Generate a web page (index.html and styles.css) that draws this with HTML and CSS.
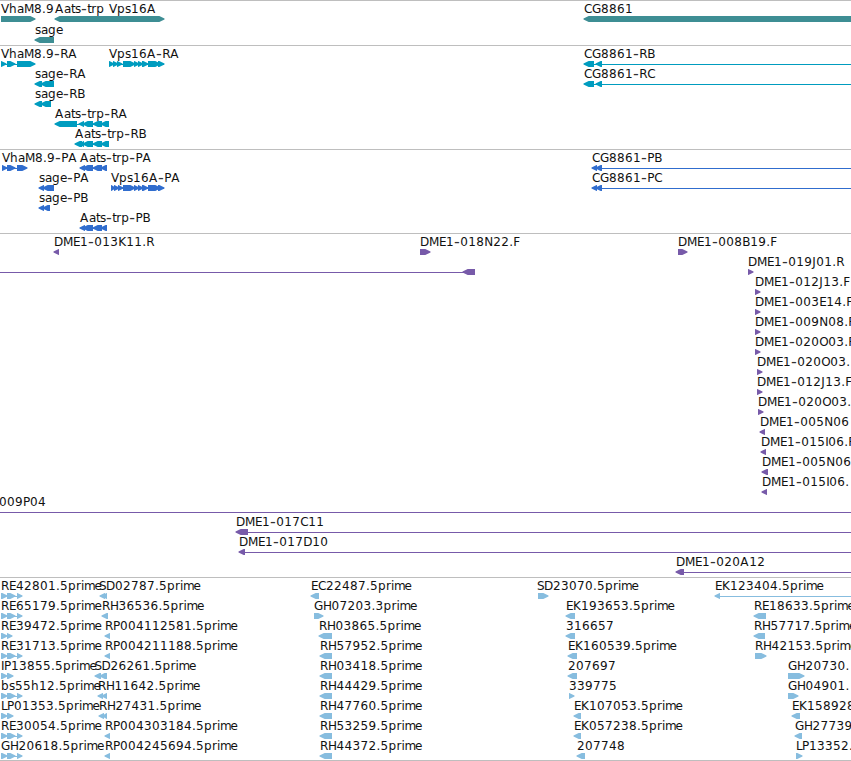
FILE: index.html
```html
<!DOCTYPE html>
<html lang="en">
<head>
<meta charset="utf-8">
<title>Genome browser</title>
<link rel="stylesheet" href="styles.css">
</head>
<body>
<main class="browser" id="browser"></main>
<script src="tracks.js"></script>
</body>
</html>
```
FILE: styles.css
```css
body {
  margin: 0;
  background: #fff;
  overflow: hidden;
}

.browser {
  display: flex;
  flex-direction: column;
  width: 851px;
  height: 761px;
  box-sizing: border-box;
  border-bottom: 1px solid #bebebe;
}

.track {
  border-top: 1px solid #bebebe;
  overflow: hidden;
}

.track svg {
  display: block;
}

.track text {
  font-family: "DejaVu Sans", sans-serif;
  font-size: 12px;
  fill: #111;
}

.track .dash {
  font-size: 16px;
  fill: #333;
}

.genes { color: #3e8e94; }
.transcripts { color: #009cbf; }
.proteins { color: #306dce; }
.clones { color: #775aa9; }
.ests { color: #87bddf; }
```
FILE: tracks.js
```js
// Each feature: [row, label, label x, glyphs].
// Glyphs: ">a,b" forward exon, "<a,b" reverse exon, "-a,b" intron line.
const leftLong = '>1,7 >7,15 -12,19 >17,22';
const vps = '>123,135 >134,139 >138,143 >142,148 >148,160 >158,164';
const aats = '-82,107 <80,85 <83,93 <93,102 <101,107';
const tracks = [
  { name: 'genes', height: 44, pitch: 21, features: [
    [0, 'VhaM8.9', 1, '>1,35'], [0, 'Aats-trp', 55, '<55,109'],
    [0, 'Vps16A', 109, '>109,164'], [0, 'CG8861', 584, '<584,860'],
    [1, 'sage', 35, '<35,54'],
  ] },
  { name: 'transcripts', height: 103, pitch: 20, features: [
    [0, 'VhaM8.9-RA', 1, '-1,30 >1,6 >7,15 >17,35'],
    [0, 'Vps16A-RA', 109, '-109,164 >109,114 >113,118 >117,122 ' + vps],
    [0, 'CG8861-RB', 584, '<584,594 -593,851 <596,602'],
    [1, 'sage-RA', 35, '<35,42 <41,54'],
    [1, 'CG8861-RC', 584, '<584,594 -593,851 <596,602'],
    [2, 'sage-RB', 35, '<35,42 <41,51'],
    [3, 'Aats-trp-RA', 55, '<55,77 -77,109 <79,84 <83,93 <93,102 <101,109'],
    [4, 'Aats-trp-RB', 75, '-77,109 <75,82 <80,84 <83,93 <93,102 <101,109'],
  ] },
  { name: 'proteins', height: 83, pitch: 20, features: [
    [0, 'VhaM8.9-PA', 2, '-2,25 >2,7 >7,15 >17,27'], [0, 'Aats-trp-PA', 80, aats],
    [0, 'CG8861-PB', 592, '<592,597 <596,602 -600,851'],
    [1, 'sage-PA', 39, '<39,44 <43,54'],
    [1, 'Vps16A-PA', 111, '-111,164 >111,115 >114,119 >118,123 ' + vps],
    [1, 'CG8861-PC', 592, '<592,597 <596,602 -600,851'],
    [2, 'sage-PB', 39, '<39,44 <43,50'], [3, 'Aats-trp-PB', 80, aats],
  ] },
  { name: 'clones', height: 343, pitch: 20, features: [
    [0, 'DME1-013K11.R', 54, '<54,59'], [0, 'DME1-018N22.F', 420, '>420,430'],
    [0, 'DME1-008B19.F', 678, '>678,687'],
    [1, '', 0, '-0,466 <463,475'], [1, 'DME1-019J01.R', 748, '>748,753'],
    [2, 'DME1-012J13.F', 755, '>755,760'], [3, 'DME1-003E14.F', 755, '>755,760'],
    [4, 'DME1-009N08.F', 755, '>755,760'], [5, 'DME1-020O03.F', 755, '>755,760'],
    [6, 'DME1-020O03.', 757, '>757,762'], [7, 'DME1-012J13.F', 757, '>757,762'],
    [8, 'DME1-020O03.', 758, '>758,763'], [9, 'DME1-005N06', 760, '<760,765'],
    [10, 'DME1-015I06.R', 761, '<761,766'], [11, 'DME1-005N06', 762, '<762,768'],
    [12, 'DME1-015I06.', 762, '<762,767'], [13, '009P04', -1, '-0,851'],
    [14, 'DME1-017C11', 236, '<236,248 -248,851'],
    [15, 'DME1-017D10', 239, '<239,245 -244,851'],
    [16, 'DME1-020A12', 676, '<676,684 -684,851'],
  ] },
  { name: 'ests', height: 182, pitch: 20, features: [
    [0, 'RE42801.5prime', 1, leftLong], [1, 'RE65179.5prime', 1, leftLong],
    [2, 'RE39472.5prime', 1, '>1,7 >7,12'], [3, 'RE31713.5prime', 1, leftLong],
    [4, 'IP13855.5prime', 1, '>1,7 >7,13'], [5, 'bs55h12.5prime', 1, leftLong],
    [6, 'LP01353.5prime', 1, '>1,7 >7,13'], [7, 'RE30054.5prime', 1, leftLong],
    [8, 'GH20618.5prime', 1, leftLong],
    [0, 'SD02787.5prime', 99, '<100,105 <102,107'], [1, 'RH36536.5prime', 102, '<102,108'],
    [2, 'RP004112581.5prime', 105, '<105,110'], [3, 'RP004211188.5prime', 105, '<105,110'],
    [4, 'SD26261.5prime', 94.5, '<95,101 <100,107'], [5, 'RH11642.5prime', 98, '<98,103 <102,107'],
    [6, 'RH27431.5prime', 99, '<99,104 <103,107'], [7, 'RP004303184.5prime', 105, '<105,110'],
    [8, 'RP004245694.5prime', 105, '<105,110'],
    [0, 'EC22487.5prime', 311, '<311,319'], [1, 'GH07203.3prime', 314, '>314,323'],
    [2, 'RH03865.5prime', 319, '<319,332'], [3, 'RH57952.5prime', 320, '<320,332'],
    [4, 'RH03418.5prime', 320, '<320,332'], [5, 'RH44429.5prime', 320, '<320,332'],
    [6, 'RH47760.5prime', 320, '<320,332'], [7, 'RH53259.5prime', 320, '<320,332'],
    [8, 'RH44372.5prime', 320, '<320,332'],
    [0, 'SD23070.5prime', 537, '>538,548'], [1, 'EK193653.5prime', 566, '<566,575'],
    [2, '316657', 566, '<566,575'], [3, 'EK160539.5prime', 568, '<568,577'],
    [4, '207697', 568, '<568,577'], [5, '339775', 569, '>569,574'],
    [6, 'EK107053.5prime', 574, '<574,581'], [7, 'EK057238.5prime', 574, '<574,581'],
    [8, '207748', 577, '<577,585'],
    [0, 'EK123404.5prime', 715, '<715,720 -719,851'], [1, 'RE18633.5prime', 754, '<754,766'],
    [2, 'RH57717.5prime', 754, '<754,765'], [3, 'RH42153.5prime', 755, '>755,766'],
    [4, 'GH20730.', 788, '>788,804'], [5, 'GH04901.', 788, '>788,798'],
    [6, 'EK158928', 792, '<792,800'], [7, 'GH27739', 795, '<795,802'],
    [8, 'LP13352.', 796, '>796,802'],
  ] },
];

// Character advances in pixels; anything not listed is 8px wide.
const advance = { '.': 4, '-': 6.3, A: 9, D: 9, E: 7, F: 7, G: 9, H: 8.5, I: 3, J: 4, L: 6,
  M: 10, N: 9, O: 9, P: 7, S: 7, a: 7, e: 7, i: 3, m: 10.5, r: 5, s: 6, t: 4 };

function label(text, x, y) {
  const xs = [];
  const ys = [];
  for (const ch of text) {
    xs.push(x);
    ys.push(ch === '-' ? y + 0.5 : y);
    x += advance[ch] || 8;
  }
  const content = text.replace(/-/g, '<tspan class="dash">-</tspan>');
  return `<text x="${xs.join(' ')}" y="${ys.join(' ')}">${content}</text>`;
}

function glyph(code, y) {
  const [a, b] = code.slice(1).split(',').map(Number);
  if (code[0] === '-') {
    return `<rect x="${a}" y="${y + 3}" width="${b - a}" height="1"/>`;
  }
  const head = Math.min(5, b - a);
  const points = code[0] === '>'
    ? [[a, y], [b - head + 0.3, y], [b + 0.5, y + 2.6], [b + 0.5, y + 3.4], [b - head + 0.3, y + 6], [a, y + 6]]
    : [[b, y], [a + head - 0.3, y], [a - 0.5, y + 2.6], [a - 0.5, y + 3.4], [a + head - 0.3, y + 6], [b, y + 6]];
  return `<polygon points="${points.join(' ')}"/>`;
}

document.getElementById('browser').innerHTML = tracks.map(t => {
  const body = t.features.map(([row, text, x, codes]) => {
    const top = row * t.pitch;
    return codes.split(' ').map(c => glyph(c, top + 15)).join('') + (text ? label(text, x, top + 12) : '');
  }).join('');
  return `<section class="track ${t.name}"><svg width="851" height="${t.height}" fill="currentColor">${body}</svg></section>`;
}).join('');
```
